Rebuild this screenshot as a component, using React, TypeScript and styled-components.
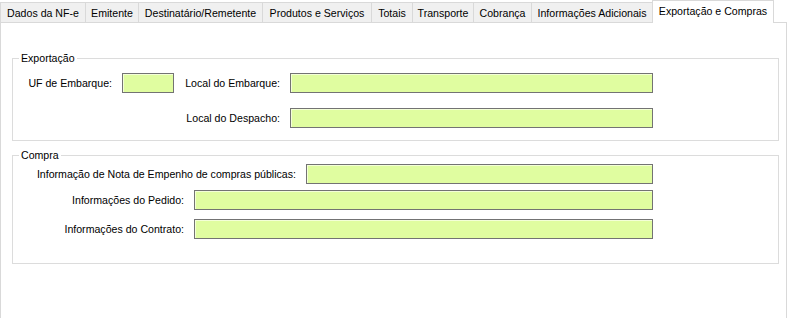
import React from 'react'
import styled, { createGlobalStyle } from 'styled-components'

const GlobalStyle = createGlobalStyle`
  html, body {
    margin: 0;
    padding: 0;
    background: #ffffff;
  }
  body {
    font-family: 'Liberation Sans', Arial, sans-serif;
    font-size: 10.6px;
    color: #000000;
  }
`

const Window = styled.div`
  width: 789px;
  height: 318px;
  overflow: hidden;
  display: flex;
  flex-direction: column;
`

const TabStrip = styled.div`
  display: flex;
  align-items: flex-end;
  height: 22px;
  position: relative;
  z-index: 1;
`

const Tab = styled.div<{ $width: number; $selected?: boolean }>`
  box-sizing: border-box;
  width: ${({ $width }) => $width}px;
  height: ${({ $selected }) => ($selected ? '23px' : '20px')};
  margin-bottom: ${({ $selected }) => ($selected ? '-1px' : '0')};
  margin-left: -1px;
  border: 1px solid #d9d9d9;
  border-bottom: none;
  background: ${({ $selected }) => ($selected ? '#ffffff' : '#f0f0f0')};
  display: flex;
  justify-content: center;
  align-items: ${({ $selected }) => ($selected ? 'flex-start' : 'center')};
  padding-top: ${({ $selected }) => ($selected ? '4px' : '1px')};
  white-space: nowrap;
  font-size: 10.6px;
  line-height: 13px;
  &:first-child {
    margin-left: 0;
  }
`

const Panel = styled.div`
  box-sizing: border-box;
  width: 787px;
  flex: 1;
  background: #ffffff;
  border: 1px solid #d9d9d9;
  border-bottom: none;
  padding: 29px 0 0 11px;
  display: flex;
  flex-direction: column;
  gap: 8px;
`

const Group = styled.fieldset<{ $padTop: number; $padBottom: number; $gap: number }>`
  box-sizing: border-box;
  width: 767px;
  margin: 0;
  min-width: 0;
  border: 1px solid #dcdcdc;
  padding: ${({ $padTop }) => $padTop}px 0 ${({ $padBottom }) => $padBottom}px 0;
  display: flex;
  flex-direction: column;
  gap: ${({ $gap }) => $gap}px;
`

const Legend = styled.legend`
  margin-left: 6px;
  padding: 0 2px;
  font-size: 10.6px;
  line-height: 13px;
`

const FieldRow = styled.div<{ $mt?: number }>`
  display: flex;
  align-items: center;
  gap: 10px;
  margin-top: ${({ $mt }) => $mt ?? 0}px;
`

const Label = styled.label<{ $width: number }>`
  width: ${({ $width }) => $width}px;
  flex: none;
  text-align: right;
  white-space: nowrap;
  font-size: 10.6px;
  line-height: 13px;
`

const Field = styled.div<{ $width: number }>`
  box-sizing: border-box;
  width: ${({ $width }) => $width}px;
  height: 20px;
  flex: none;
  background: #e0fda0;
  border: 1px solid #737373;
  box-shadow: inset 1px 1px 0 #f4ffd8;
`

const tabs = [
  { label: 'Dados da NF-e', width: 86 },
  { label: 'Emitente', width: 54 },
  { label: 'Destinatário/Remetente', width: 125 },
  { label: 'Produtos e Serviços', width: 110 },
  { label: 'Totais', width: 42 },
  { label: 'Transporte', width: 62 },
  { label: 'Cobrança', width: 59 },
  { label: 'Informações Adicionais', width: 122 },
  { label: 'Exportação e Compras', width: 122, selected: true }
]

export default function App() {
  return (
    <>
      <GlobalStyle />
      <Window>
        <TabStrip>
          {tabs.map(t => (
            <Tab key={t.label} $width={t.width} $selected={t.selected}>
              {t.label}
            </Tab>
          ))}
        </TabStrip>
        <Panel>
          <Group $padTop={8} $padBottom={12} $gap={15}>
            <Legend>Exportação</Legend>
            <FieldRow>
              <Label $width={99}>UF de Embarque:</Label>
              <Field $width={52} />
              <Label $width={96}>Local do Embarque:</Label>
              <Field $width={363} />
            </FieldRow>
            <FieldRow>
              <Label $width={267}>Local do Despacho:</Label>
              <Field $width={363} />
            </FieldRow>
          </Group>
          <Group $padTop={2} $padBottom={24} $gap={0}>
            <Legend>Compra</Legend>
            <FieldRow>
              <Label $width={283}>Informação de Nota de Empenho de compras públicas:</Label>
              <Field $width={347} />
            </FieldRow>
            <FieldRow $mt={6}>
              <Label $width={171}>Informações do Pedido:</Label>
              <Field $width={459} />
            </FieldRow>
            <FieldRow $mt={9}>
              <Label $width={171}>Informações do Contrato:</Label>
              <Field $width={459} />
            </FieldRow>
          </Group>
        </Panel>
      </Window>
    </>
  )
}
